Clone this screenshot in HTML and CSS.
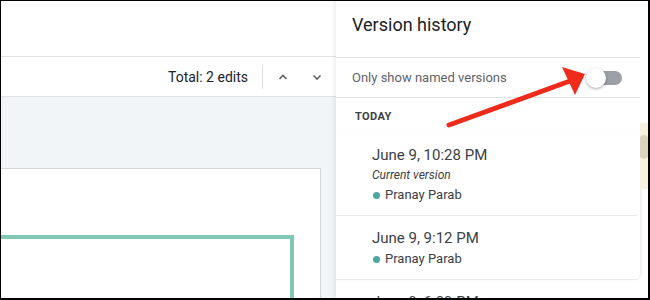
FILE: index.html
```html
<!DOCTYPE html>
<html lang="en">
<head>
  <meta charset="UTF-8" />
  <title>Version history</title>
  <link rel="stylesheet" href="styles.css">
</head>
<body>
  <div class="frame">
    <div class="main">
      <div class="doc-header"></div>
      <div class="toolbar">
        <span class="total">Total: 2 edits</span>
        <span class="sep"></span>
        <button class="nav" aria-label="Previous edit">
          <svg width="12" height="12" viewBox="0 0 12 12"><path d="M2.5 8 L6 4.5 L9.5 8" fill="none" stroke="#5f6368" stroke-width="1.6"/></svg>
        </button>
        <button class="nav" aria-label="Next edit">
          <svg width="12" height="12" viewBox="0 0 12 12"><path d="M2.5 4.5 L6 8 L9.5 4.5" fill="none" stroke="#5f6368" stroke-width="1.6"/></svg>
        </button>
      </div>
      <div class="canvas">
        <div class="page">
          <div class="shape"></div>
        </div>
      </div>
    </div>

    <div class="side">
      <div class="panel">
        <div class="panel-title">Version history</div>
        <div class="filter">
          <span>Only show named versions</span>
          <span class="switch"><span class="knob"></span></span>
        </div>
        <div class="day">TODAY</div>
        <div class="card">
          <div class="version">
            <div class="when">June 9, 10:28 PM</div>
            <div class="current">Current version</div>
            <div class="who"><span class="dot"></span>Pranay Parab</div>
          </div>
          <div class="version">
            <div class="when">June 9, 9:12 PM</div>
            <div class="who"><span class="dot"></span>Pranay Parab</div>
          </div>
        </div>
        <div class="version">
          <div class="when">June 9, 6:09 PM</div>
          <div class="who"><span class="dot"></span>Pranay Parab</div>
        </div>
      </div>
      <div class="strip">
        <div class="behind"><span class="blob"></span></div>
      </div>
    </div>

    <svg class="arrow" width="650" height="300" viewBox="0 0 650 300">
      <line x1="449" y1="125" x2="570" y2="81" stroke="#ef2b1c" stroke-width="5" stroke-linecap="round"/>
      <polygon points="562,67 585,74 575,95" fill="#ef2b1c"/>
    </svg>
  </div>
</body>
</html>
```

FILE: styles.css
```css
* {
  box-sizing: border-box;
}
body {
  margin: 0;
  font-family: Roboto, 'Liberation Sans', sans-serif;
  background: #fff;
}
.frame {
  position: relative;
  display: flex;
  width: 650px;
  height: 300px;
  border: 1px solid #000;
  border-right-width: 2px;
  border-bottom-width: 2px;
  overflow: hidden;
}
.main {
  width: 335px;
  flex-shrink: 0;
  display: flex;
  flex-direction: column;
}
.doc-header {
  height: 56px;
  flex-shrink: 0;
  border-bottom: 1px solid #e3e3e3;
}
.toolbar {
  height: 40px;
  flex-shrink: 0;
  display: flex;
  align-items: center;
  justify-content: flex-end;
  padding-right: 5px;
  border-bottom: 1px solid #dfe1e5;
}
.total {
  font-size: 14px;
  color: #202124;
  margin-right: 14px;
}
.sep {
  width: 1px;
  height: 24px;
  background: #dadce0;
  margin-right: 6px;
}
.nav {
  width: 28px;
  height: 28px;
  border: none;
  background: none;
  padding: 0;
  display: flex;
  align-items: center;
  justify-content: center;
}
.nav + .nav {
  margin-left: 6px;
}
.canvas {
  flex: 1;
  background: #f2f5f8;
  padding-top: 71px;
  padding-right: 15px;
}
.page {
  height: 100%;
  background: #fff;
  border-top: 1px solid #d4d6d9;
  border-right: 1px solid #d4d6d9;
  padding-top: 66px;
  padding-right: 26px;
}
.shape {
  height: 100%;
  border-top: 4px solid #82c8b8;
  border-right: 4px solid #82c8b8;
}
.side {
  flex: 1;
  display: flex;
  box-shadow: -2px 0 4px rgba(0, 0, 0, 0.07);
  position: relative;
}
.panel {
  flex: 1;
  display: flex;
  flex-direction: column;
}
.panel > * {
  flex-shrink: 0;
}
.panel-title {
  height: 57px;
  padding: 12px 0 0 16px;
  font-size: 18px;
  line-height: 24px;
  color: #202124;
  border-bottom: 1px solid #e3e3e3;
}
.filter {
  height: 40px;
  display: flex;
  align-items: center;
  justify-content: space-between;
  padding: 0 18px 0 16px;
  font-size: 13px;
  color: #5f6368;
  border-bottom: 1px solid #e3e3e3;
}
.switch {
  position: relative;
  width: 30px;
  height: 14px;
  border-radius: 7px;
  background: #9aa0a6;
}
.knob {
  position: absolute;
  left: -6px;
  top: -3px;
  width: 20px;
  height: 20px;
  border-radius: 50%;
  background: #fff;
  box-shadow: 0 1px 3px rgba(0, 0, 0, 0.35);
}
.day {
  height: 35px;
  padding: 12px 0 0 19px;
  font-size: 11px;
  line-height: 14px;
  font-weight: 700;
  letter-spacing: 0.4px;
  color: #3c4043;
}
.card {
  box-shadow: 2px 0 2px rgba(0, 0, 0, 0.06);
  border-bottom-right-radius: 8px;
}
.version {
  padding: 12px 0 11px 36px;
  border-bottom: 1px solid #e8eaed;
  margin-right: 3px;
}
.when {
  font-size: 15px;
  line-height: 20px;
  color: #3c4043;
}
.current {
  margin-top: 1px;
  font-size: 12px;
  line-height: 18px;
  font-style: italic;
  color: #3c4043;
}
.who {
  margin-top: 2px;
  display: flex;
  align-items: center;
  font-size: 13px;
  line-height: 18px;
  color: #3c4043;
}
.dot {
  width: 7px;
  height: 7px;
  border-radius: 50%;
  background: #4aa89c;
  margin: 0 5px 0 1px;
}
.strip {
  width: 8px;
  padding-top: 122px;
}
.behind {
  height: 66px;
  background: #f7f1de;
  position: relative;
  overflow: hidden;
}
.blob {
  position: absolute;
  left: -3px;
  top: 12px;
  width: 14px;
  height: 24px;
  border-radius: 50%;
  background: #ddd4bd;
}
.arrow {
  position: absolute;
  left: -1px;
  top: -1px;
  pointer-events: none;
}
```
